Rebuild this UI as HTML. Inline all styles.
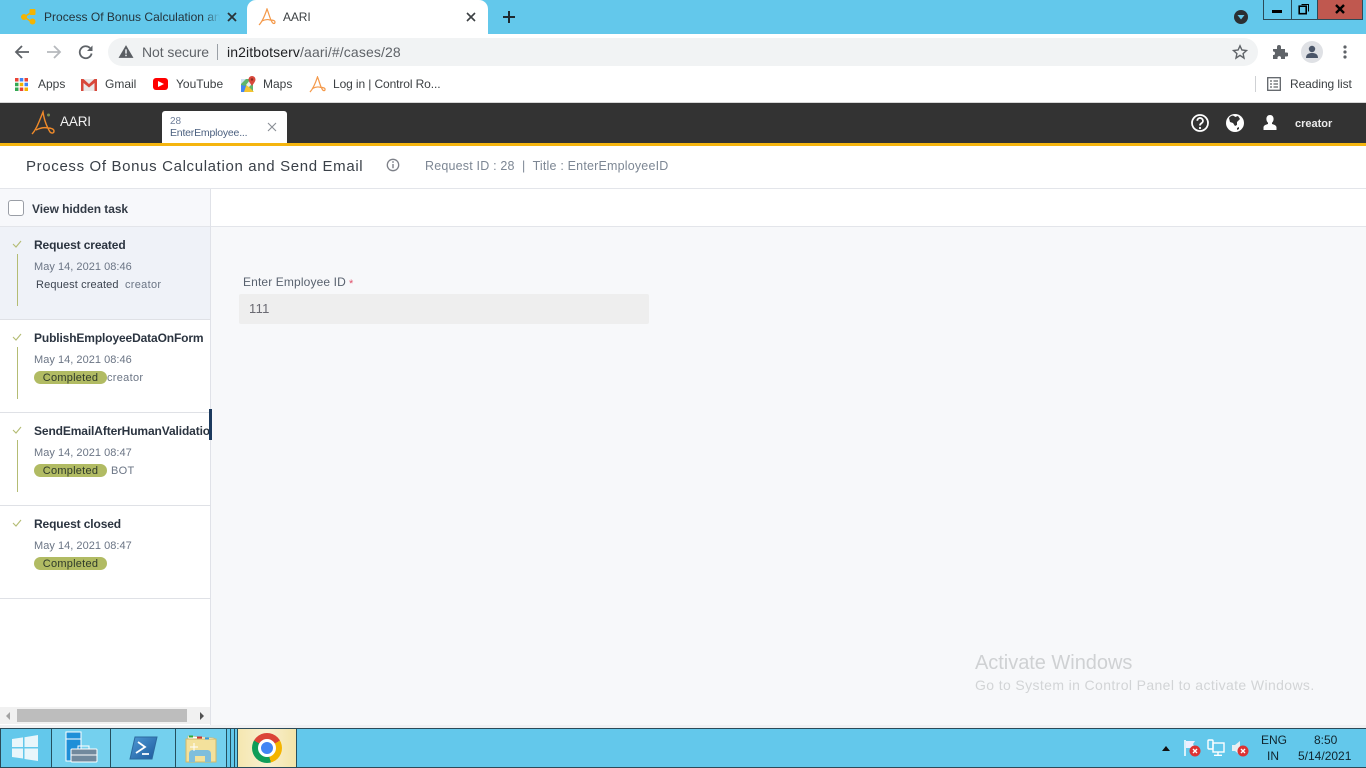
<!DOCTYPE html>
<html lang="en"><head><meta charset="utf-8"><title>AARI</title>
<style>
html,body{margin:0;padding:0;width:1366px;height:768px;overflow:hidden;background:#fff;font-family:"Liberation Sans",sans-serif}
div,span,svg{position:absolute;box-sizing:border-box}
.t{white-space:nowrap;line-height:1}
.tl{font-size:12px;font-weight:bold;color:#2b3440;left:34px;letter-spacing:-.12px}
.dt{font-size:11px;color:#6b7585;left:34px;letter-spacing:.03px}
.pill{left:34px;width:73px;height:13px;border-radius:7px;background:#b1bb63;color:#2f3a2a;font-size:11px;line-height:14px;text-align:center;letter-spacing:.25px}
.sub{font-size:11px;color:#6b7585;letter-spacing:.3px}
.ln{left:17px;width:1px;background:#b4bc74}
.hr{left:0;width:211px;height:1px;background:#dfe1e6}
.bm{font-size:12px;color:#3c4043;top:78px}
.sep{top:729px;width:1px;height:38px;background:#24505f}
</style></head><body>

<!-- tab strip -->
<div style="left:0;top:0;width:1366px;height:34px;background:#63c8eb"></div>
<svg style="left:20px;top:8px" width="18" height="18" viewBox="0 0 18 18"><path d="M4 9L12 4M4 9l8 5" stroke="#f4b400" stroke-width="1.500"/><circle cx="4" cy="9" r="3" fill="#f4b400"/><rect x="9.500" y="1" width="6" height="6" rx="1" fill="#f4b400"/><circle cx="12.500" cy="13.500" r="3" fill="#f4b400"/></svg>
<div class="t" style="left:44px;top:11px;width:176px;overflow:hidden;font-size:12px;color:#24343c;letter-spacing:.02px">Process Of Bonus Calculation and Send Email</div>
<div style="left:204px;top:8px;width:16px;height:18px;background:linear-gradient(90deg,rgba(99,200,235,0),#63c8eb)"></div>
<svg style="left:226px;top:11px" width="12" height="12" viewBox="0 0 12 12"><path d="M2 2l8 8M10 2l-8 8" stroke="#2a3338" stroke-width="1.800"/></svg>
<div style="left:247px;top:0;width:241px;height:34px;background:#fff;border-radius:9px 9px 0 0"></div>
<svg style="left:258px;top:8px" width="18" height="18" viewBox="0 0 18 18" fill="none"><path d="M1 17C4 14 7 7 9 1c2 5 3 10 5 13 1 2 3 2 3 0 0-2-3-2-5-2-3-1-6 0-8 1" stroke="#f4994a" stroke-width="1.200"/></svg>
<div class="t" style="left:283px;top:11px;font-size:12px;color:#3c4043;letter-spacing:-.1px">AARI</div>
<svg style="left:465px;top:11px" width="12" height="12" viewBox="0 0 12 12"><path d="M2 2l8 8M10 2l-8 8" stroke="#3c4043" stroke-width="1.600"/></svg>
<svg style="left:503px;top:11px" width="12" height="12" viewBox="0 0 12 12"><path d="M6 0v12M0 6h12" stroke="#1f2a30" stroke-width="2"/></svg>
<svg style="left:1234px;top:10px" width="14" height="14" viewBox="0 0 14 14"><circle cx="7" cy="7" r="7" fill="#2b2f33"/><path d="M3.500 5h7L7 9.500z" fill="#63c8eb"/></svg>
<!-- window buttons -->
<div style="left:1263px;top:0;width:100px;height:20px;border:1px solid #2b4a58;border-top:0;background:#63c8eb"></div>
<div style="left:1317px;top:0;width:46px;height:20px;background:#c0584f;border:1px solid #2b4a58;border-top:0"></div>
<div style="left:1291px;top:0;width:1px;height:20px;background:#2b4a58"></div>
<div style="left:1272px;top:10px;width:10px;height:3px;background:#000"></div>
<svg style="left:1298px;top:3px" width="12" height="12" viewBox="0 0 12 12" fill="none"><rect x="1.200" y="3.200" width="7" height="7.500" stroke="#000" stroke-width="1.600"/><path d="M3.500 1.500h7v7" stroke="#000" stroke-width="1"/></svg>
<svg style="left:1334px;top:4px" width="12" height="10" viewBox="0 0 12 10"><path d="M2 1l8 8M10 1L2 9" stroke="#000" stroke-width="2.400"/></svg>

<!-- toolbar -->
<svg style="left:14px;top:44px" width="16" height="16" viewBox="0 0 16 16" fill="none"><path d="M15 8H2M8 2L2 8l6 6" stroke="#5f6368" stroke-width="1.800"/></svg>
<svg style="left:46px;top:44px" width="16" height="16" viewBox="0 0 16 16" fill="none"><path d="M1 8h13M8 2l6 6-6 6" stroke="#b6b9bd" stroke-width="1.800"/></svg>
<svg style="left:78px;top:44px" width="16" height="16" viewBox="0 0 16 16" fill="none"><path d="M13.600 9.500A6 6 0 1 1 12 4" stroke="#5f6368" stroke-width="1.800"/><path d="M14.500 1.500v5.500H9z" fill="#5f6368"/></svg>
<div style="left:108px;top:38px;width:1150px;height:28px;border-radius:14px;background:#f1f3f4"></div>
<svg style="left:118px;top:44px" width="16" height="15" viewBox="0 0 15 14"><path d="M7.500 1L14.500 13H.5z" fill="#5a5e63"/><rect x="6.800" y="5" width="1.400" height="4" fill="#f1f3f4"/><rect x="6.800" y="10" width="1.400" height="1.400" fill="#f1f3f4"/></svg>
<div class="t" style="left:142px;top:45px;font-size:14px;color:#5f6368;letter-spacing:-.07px">Not secure</div>
<div style="left:217px;top:44px;width:1px;height:16px;background:#9aa0a6"></div>
<div class="t" style="left:227px;top:45px;font-size:14px;color:#5f6368;letter-spacing:.12px"><b style="font-weight:normal;color:#202124">in2itbotserv</b>/aari/#/cases/28</div>
<svg style="left:1232px;top:44px" width="16" height="16" viewBox="0 0 16 16" fill="none"><path d="M8 1.800l1.900 4.200 4.600.5-3.400 3.100.9 4.500L8 11.400l-4 2.700.9-4.500L1.500 6.500l4.600-.5z" stroke="#5f6368" stroke-width="1.400"/></svg>
<svg style="left:1272px;top:44px" width="16" height="16" viewBox="0 0 16 16"><path d="M1 5h4V3a2 2 0 0 1 4 0v2h4v3.500h1.500a2 2 0 0 1 0 4H13V15H9v-1.500a1.800 1.800 0 0 0-3.500 0V15H1v-4h1a2 2 0 0 0 0-3.500H1z" fill="#5f6368"/></svg>
<div style="left:1301px;top:41px;width:22px;height:22px;border-radius:50%;background:#dfe1e5"></div>
<svg style="left:1304px;top:44px" width="16" height="16" viewBox="0 0 16 16"><circle cx="8" cy="5" r="3.200" fill="#4a5568"/><path d="M2 14c0-4 3-5 6-5s6 1 6 5z" fill="#4a5568"/></svg>
<svg style="left:1342px;top:44px" width="6" height="16" viewBox="0 0 6 16" fill="#5f6368"><circle cx="3" cy="3" r="1.600"/><circle cx="3" cy="8" r="1.600"/><circle cx="3" cy="13" r="1.600"/></svg>

<!-- bookmarks -->
<svg style="left:15px;top:78px" width="13" height="13" viewBox="0 0 13 13"><g><rect width="3.500" height="3.500" fill="#ea4335"/><rect x="4.750" width="3.500" height="3.500" fill="#4285f4"/><rect x="9.500" width="3.500" height="3.500" fill="#ea4335"/><rect y="4.750" width="3.500" height="3.500" fill="#34a853"/><rect x="4.750" y="4.750" width="3.500" height="3.500" fill="#f4b400"/><rect x="9.500" y="4.750" width="3.500" height="3.500" fill="#4285f4"/><rect y="9.500" width="3.500" height="3.500" fill="#34a853"/><rect x="4.750" y="9.500" width="3.500" height="3.500" fill="#ea4335"/><rect x="9.500" y="9.500" width="3.500" height="3.500" fill="#f4b400"/></g></svg>
<div class="t bm" style="left:38px">Apps</div>
<svg style="left:81px;top:78px" width="16" height="13" viewBox="0 0 16 13"><rect x="1" y="1" width="14" height="12" fill="#e9e9e9"/><path d="M0 1h2.500L8 6l5.500-5H16v12h-2.500V5L8 9.500 2.500 5v8H0z" fill="#d8483b"/></svg>
<div class="t bm" style="left:105px">Gmail</div>
<div style="left:153px;top:78px;width:15px;height:12px;border-radius:3px;background:#f00"></div>
<svg style="left:158px;top:81px" width="6" height="6" viewBox="0 0 6 6"><path d="M0 0l6 3-6 3z" fill="#fff"/></svg>
<div class="t bm" style="left:176px">YouTube</div>
<svg style="left:240px;top:76px" width="16" height="16" viewBox="0 0 16 16"><path d="M1 3h12v13H1z" fill="#5fb56a"/><path d="M1 16l6-7 7 7z" fill="#f4c430"/><path d="M1 16V9l5 1-2 6z" fill="#4285f4"/><path d="M1 3h5L1 8z" fill="#cfe2f3"/><path d="M6 9l4-5 3 3-4 4z" fill="#e8eef2"/><path d="M12 0a3.500 3.500 0 0 1 3.500 3.500c0 2-2 4-3.500 6.500C10.500 7.500 8.500 5.500 8.500 3.500A3.500 3.500 0 0 1 12 0z" fill="#d8483b"/><circle cx="12" cy="3.500" r="1.200" fill="#8b2a22"/></svg>
<div class="t bm" style="left:263px">Maps</div>
<svg style="left:309px;top:76px" width="17" height="17" viewBox="0 0 18 18" fill="none"><path d="M1 17C4 14 7 7 9 1c2 5 3 10 5 13 1 2 3 2 3 0 0-2-3-2-5-2-3-1-6 0-8 1" stroke="#f4994a" stroke-width="1.300"/></svg>
<div class="t bm" style="left:333px;letter-spacing:-.11px">Log in | Control Ro...</div>
<div style="left:1255px;top:76px;width:1px;height:16px;background:#cfd1d4"></div>
<svg style="left:1267px;top:77px" width="14" height="14" viewBox="0 0 14 14" fill="none"><rect x=".7" y=".7" width="12.600" height="12.600" stroke="#5f6368" stroke-width="1.300"/><path d="M3 4h2M6.500 4H11M3 7h2M6.500 7H11M3 10h2M6.500 10H11" stroke="#5f6368" stroke-width="1.200"/></svg>
<div class="t bm" style="left:1290px;letter-spacing:-.08px">Reading list</div>

<!-- app header -->
<div style="left:0;top:102px;width:1366px;height:1px;background:#d6d6d6"></div>
<div style="left:0;top:103px;width:1366px;height:41px;background:#333"></div>
<div style="left:0;top:143px;width:1366px;height:3px;background:#f5b50f"></div>
<svg style="left:30px;top:110px" width="26" height="26" viewBox="0 0 26 26" fill="none"><path d="M2 24C6 20 9 12 13 2c1 7 4 15 7 20 2 2 4 1 4-1 0-2-3-3-6-3-4-1-8 0-12 2" stroke="#ef8a2a" stroke-width="1.400"/><circle cx="18.500" cy="5" r="1.500" fill="#7d8f52"/></svg>
<div class="t" style="left:60px;top:115px;font-size:13.500px;color:#f2f2f2;letter-spacing:-.15px">AARI</div>
<div style="left:162px;top:111px;width:125px;height:32px;background:#fff;border-radius:3px 3px 0 0"></div>
<div class="t" style="left:170px;top:117px;font-size:10px;color:#6f7f9a">28</div>
<div class="t" style="left:170px;top:128px;font-size:10.500px;color:#4c6180;letter-spacing:-.2px">EnterEmployee...</div>
<svg style="left:267px;top:122px" width="10" height="10" viewBox="0 0 10 10"><path d="M1 1l8 8M9 1L1 9" stroke="#8a8f96" stroke-width="1.100"/></svg>
<svg style="left:1190px;top:113px" width="20" height="20" viewBox="0 0 20 20" fill="none"><circle cx="10" cy="10" r="8" stroke="#fff" stroke-width="1.800"/><path d="M7.300 7.800a2.800 2.800 0 1 1 4.200 2.400c-1 .6-1.500 1-1.500 2.300" stroke="#fff" stroke-width="1.800"/><circle cx="10" cy="15" r="1.100" fill="#fff"/></svg>
<svg style="left:1225px;top:113px" width="20" height="20" viewBox="0 0 20 20"><circle cx="10" cy="10" r="9" fill="#fff"/><path d="M4 5c2-3 5-3 6-1l3-1 2 3-3 3 0 3-2 1-2-3-3-1z" fill="#333"/><path d="M12 15l2-1 0 2-2 1z" fill="#333"/></svg>
<svg style="left:1262px;top:114px" width="16" height="17" viewBox="0 0 16 17"><path d="M8 1c2.300 0 3.600 1.700 3.600 4 0 1.800-.8 3-1.600 3.800v1.200c2.500.8 4.500 1.500 4.500 3.500V16h-13v-2.500c0-2 2-2.700 4.500-3.500V8.800C5.200 8 4.400 6.800 4.400 5 4.400 2.700 5.700 1 8 1z" fill="#fff"/></svg>
<div class="t" style="left:1295px;top:119px;font-size:11px;font-weight:bold;color:#ececec">creator</div>

<!-- title bar -->
<div class="t" style="left:26px;top:159px;font-size:15px;color:#3a4048;letter-spacing:.65px">Process Of Bonus Calculation and Send Email</div>
<svg style="left:386px;top:158px" width="14" height="14" viewBox="0 0 14 14" fill="none"><circle cx="7" cy="7" r="5.700" stroke="#7d8088" stroke-width="1.300"/><path d="M7 6v4.200" stroke="#7d8088" stroke-width="1.400"/><circle cx="7" cy="4" r=".9" fill="#7d8088"/></svg>
<div class="t" style="left:425px;top:160px;font-size:12.500px;color:#7d8794;letter-spacing:.19px">Request ID : 28&nbsp; |&nbsp; Title : EnterEmployeeID</div>

<!-- main area -->
<div style="left:0;top:188px;width:1366px;height:1px;background:#e3e5ea"></div>
<div style="left:0;top:189px;width:210px;height:536px;background:#fff"></div>
<div style="left:0;top:189px;width:210px;height:38px;background:#f7f8fb"></div>
<div style="left:211px;top:189px;width:1155px;height:37px;background:#fff"></div>
<div style="left:211px;top:227px;width:1155px;height:498px;background:#f7f8fa"></div>
<div style="left:0;top:226px;width:1366px;height:1px;background:#e3e5ea"></div>
<div style="left:210px;top:189px;width:1px;height:536px;background:#e0e2e8"></div>
<div style="left:8px;top:200px;width:16px;height:16px;background:#fff;border:1px solid #9a9ea6;border-radius:3px"></div>
<div class="t" style="left:32px;top:203px;font-size:12px;font-weight:bold;color:#333b46;letter-spacing:-.07px">View hidden task</div>

<!-- sidebar items -->
<div style="left:0;top:227px;width:210px;height:92px;background:#eff2f8"></div>
<svg style="left:12px;top:240px" width="10" height="8" viewBox="0 0 10 8" fill="none"><path d="M1 4l3 3 5-6" stroke="#b4bc74" stroke-width="1.100"/></svg>
<div class="ln" style="top:254px;height:52px"></div>
<div class="t tl" style="top:239px">Request created</div>
<div class="t dt" style="top:262px">May 14, 2021 08:46</div>
<div class="t" style="left:36px;top:280px;font-size:11px;color:#3c4450;letter-spacing:.13px">Request created</div>
<div class="t sub" style="left:125px;top:280px">creator</div>
<div class="hr" style="top:319px"></div>

<svg style="left:12px;top:333px" width="10" height="8" viewBox="0 0 10 8" fill="none"><path d="M1 4l3 3 5-6" stroke="#b4bc74" stroke-width="1.100"/></svg>
<div class="ln" style="top:347px;height:52px"></div>
<div class="t tl" style="top:332px;letter-spacing:-.13px">PublishEmployeeDataOnForm</div>
<div class="t dt" style="top:355px">May 14, 2021 08:46</div>
<div class="pill" style="top:371px">Completed</div>
<div class="t sub" style="left:107px;top:373px">creator</div>
<div class="hr" style="top:412px"></div>

<svg style="left:12px;top:426px" width="10" height="8" viewBox="0 0 10 8" fill="none"><path d="M1 4l3 3 5-6" stroke="#b4bc74" stroke-width="1.100"/></svg>
<div class="ln" style="top:440px;height:52px"></div>
<div class="t tl" style="top:425px;width:176px;overflow:hidden">SendEmailAfterHumanValidation</div>
<div class="t dt" style="top:448px">May 14, 2021 08:47</div>
<div class="pill" style="top:464px">Completed</div>
<div class="t sub" style="left:111px;top:466px">BOT</div>
<div class="hr" style="top:505px"></div>

<svg style="left:12px;top:519px" width="10" height="8" viewBox="0 0 10 8" fill="none"><path d="M1 4l3 3 5-6" stroke="#b4bc74" stroke-width="1.100"/></svg>
<div class="t tl" style="top:518px">Request closed</div>
<div class="t dt" style="top:541px">May 14, 2021 08:47</div>
<div class="pill" style="top:557px">Completed</div>
<div class="hr" style="top:598px"></div>

<div style="left:209px;top:409px;width:3px;height:31px;background:#1c3a5e"></div>

<!-- sidebar scrollbar -->
<div style="left:0;top:707px;width:210px;height:17px;background:#f1f1f1"></div>
<div style="left:17px;top:709px;width:170px;height:13px;background:#bdbdbd"></div>
<svg style="left:5px;top:712px" width="6" height="8" viewBox="0 0 6 8"><path d="M5 0v8L1 4z" fill="#a3a3a3"/></svg>
<svg style="left:199px;top:712px" width="6" height="8" viewBox="0 0 6 8"><path d="M1 0v8l4-4z" fill="#505050"/></svg>

<!-- form -->
<div class="t" style="left:243px;top:276px;font-size:12px;color:#59626f;letter-spacing:.13px">Enter Employee ID</div>
<div class="t" style="left:349px;top:279px;font-size:11px;color:#e0506a">*</div>
<div style="left:239px;top:294px;width:410px;height:30px;background:#eeeeee;border-radius:2px"></div>
<div class="t" style="left:249px;top:302px;font-size:13px;color:#6a6a72;letter-spacing:.3px">111</div>

<!-- watermark -->
<div class="t" style="left:975px;top:653px;font-size:20px;color:#cfd1d3;letter-spacing:-.03px">Activate Windows</div>
<div class="t" style="left:975px;top:678px;font-size:14px;color:#d2d4d6;letter-spacing:.38px">Go to System in Control Panel to activate Windows.</div>

<!-- taskbar -->
<div style="left:0;top:725px;width:1366px;height:3px;background:#f0f0f2"></div>
<div style="left:0;top:728px;width:1366px;height:40px;background:#63c8eb;border-top:1px solid #2b4a58;border-bottom:1px solid #2b4a58"></div>
<div style="left:0;top:729px;width:1px;height:38px;background:#2b4a58"></div>
<div style="left:52px;top:729px;width:123px;height:38px;background:#74d0ee"></div>
<div style="left:176px;top:729px;width:50px;height:38px;background:#74d0ee"></div>
<div class="sep" style="left:51px"></div><div class="sep" style="left:110px"></div><div class="sep" style="left:175px"></div><div class="sep" style="left:226px"></div><div class="sep" style="left:230px"></div><div class="sep" style="left:234px"></div><div class="sep" style="left:237px"></div><div class="sep" style="left:296px"></div>
<svg style="left:11px;top:734px" width="28" height="28" viewBox="0 0 28 28"><path d="M1 5l11-1.600V13H1zM13.500 3.200L27 1v12H13.500zM1 14.500h11v10L1 23zM13.500 14.500H27V27l-13.500-2z" fill="#e8f6fb"/></svg>
<svg style="left:64px;top:731px" width="34" height="34" viewBox="0 0 34 34"><rect x="2" y="1" width="15" height="29" fill="#1e8fd8" stroke="#fff"/><path d="M2 8h15" stroke="#fff"/><rect x="7" y="18" width="26" height="13" rx="1" fill="#71899d" stroke="#fff"/><path d="M14 18v-3h11v3" fill="none" stroke="#fff"/><path d="M7 24h26" stroke="#fff"/></svg>
<svg style="left:129px;top:736px" width="29" height="24" viewBox="0 0 29 24"><defs><linearGradient id="ps" x1="0" y1="0" x2="1" y2="1"><stop offset="0" stop-color="#4f9ad6"/><stop offset="1" stop-color="#1c5a9c"/></linearGradient></defs><path d="M6 1h22l-5 22H1z" fill="url(#ps)" stroke="#2c6a9f"/><path d="M9 6l7 5-9 6M13 18h7" fill="none" stroke="#fff" stroke-width="1.800"/></svg>
<svg style="left:185px;top:733px" width="32" height="30" viewBox="0 0 32 30"><path d="M3 3l26 2v8H3z" fill="#fff" stroke="#d2b868" stroke-width=".6"/><path d="M1 6h30v23H1z" fill="#f3e19c" stroke="#d2b868"/><rect x="4" y="2.500" width="4" height="2" fill="#3a3"/><rect x="12" y="3.500" width="5" height="2" fill="#c33"/><rect x="20" y="4.500" width="4" height="2" fill="#39d"/><path d="M4 29v-8c0-3 2-4 4-4h14c2 0 4 1 4 4v8h-6v-6H10v6z" fill="#7fbedc"/><path d="M9 10v8M5 14h8" stroke="#fff" stroke-width="1"/></svg>
<div style="left:238px;top:729px;width:58px;height:38px;background:linear-gradient(90deg,#f5e7b0,#f8f0d0 50%,#f3e4a8);"></div>
<div style="left:252px;top:733px;width:30px;height:30px;border-radius:50%;background:conic-gradient(from -60deg,#db4437 0 120deg,#f4b400 120deg 225deg,#0f9d58 225deg 360deg)"></div>
<div style="left:258px;top:739px;width:18px;height:18px;border-radius:50%;background:#4285f4;border:3px solid #fff"></div>

<!-- tray -->
<svg style="left:1162px;top:746px" width="8" height="5" viewBox="0 0 8 5"><path d="M4 0l4 5H0z" fill="#111"/></svg>
<svg style="left:1183px;top:739px" width="18" height="18" viewBox="0 0 18 18"><path d="M2 1v16" stroke="#fff" stroke-width="1.500"/><path d="M3 2h9l-2 3 2 4H3z" fill="#eef"/><circle cx="12" cy="12" r="5.500" fill="#d33"/><path d="M10 10l4 4M14 10l-4 4" stroke="#fff" stroke-width="1.400"/></svg>
<svg style="left:1207px;top:739px" width="18" height="18" viewBox="0 0 18 18" fill="none" stroke="#fff" stroke-width="1.400"><rect x="1" y="1" width="5" height="9" rx="1"/><rect x="6" y="4" width="11" height="9"/><path d="M11 13v3M7 16.300h8"/></svg>
<svg style="left:1231px;top:739px" width="18" height="18" viewBox="0 0 18 18"><path d="M1 6h3l5-4v14l-5-4H1z" fill="#e6eef2"/><circle cx="12" cy="12" r="5.500" fill="#d33"/><path d="M10 10l4 4M14 10l-4 4" stroke="#fff" stroke-width="1.400"/></svg>
<div class="t" style="left:1261px;top:734px;font-size:12px;color:#10252e">ENG</div>
<div class="t" style="left:1267px;top:750px;font-size:12px;color:#10252e">IN</div>
<div class="t" style="left:1314px;top:734px;font-size:12px;color:#10252e">8:50</div>
<div class="t" style="left:1298px;top:750px;font-size:12px;color:#10252e">5/14/2021</div>
</body></html>
